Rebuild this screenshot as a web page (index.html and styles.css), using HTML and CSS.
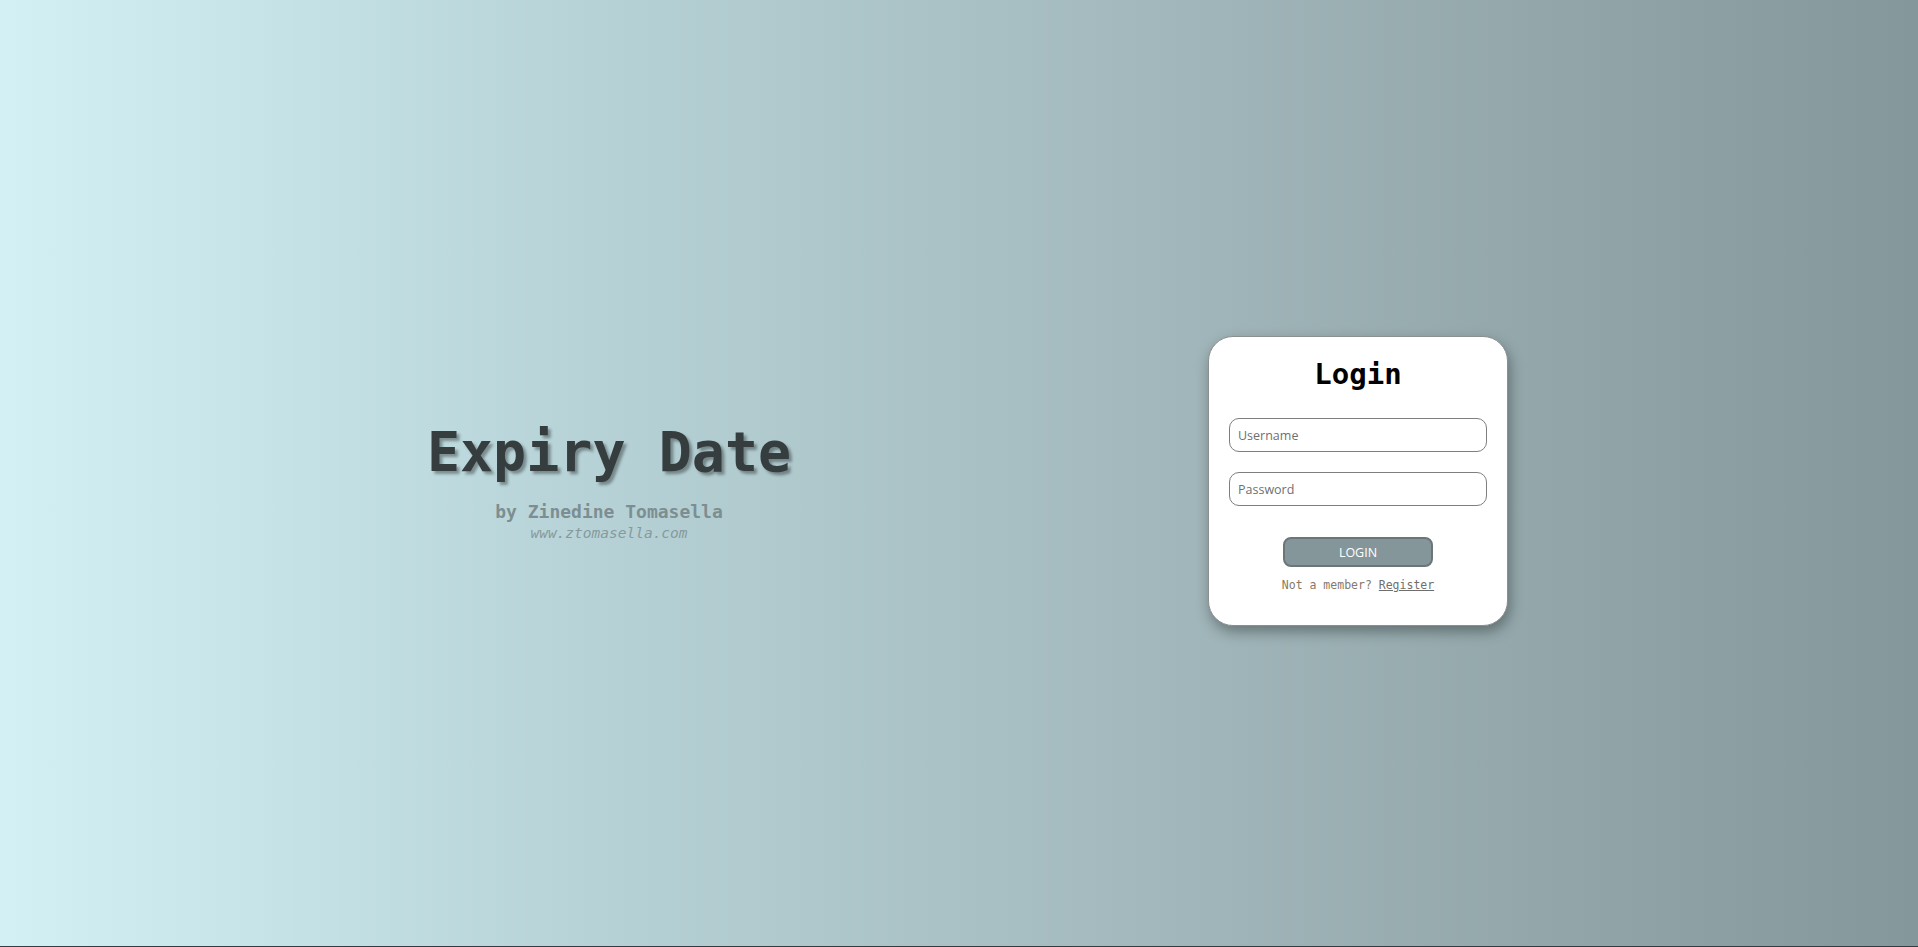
FILE: index.html
```html
<!DOCTYPE html>
<html lang="en">
<head>
<meta charset="utf-8">
<title>Expiry Date - Login</title>
<link rel="stylesheet" href="styles.css">
</head>
<body>
<main class="page">
  <section class="brand">
    <h1 class="brand-title">Expiry Date</h1>
    <p class="brand-author">by Zinedine Tomasella</p>
    <p class="brand-site">www.ztomasella.com</p>
  </section>
  <section class="card">
    <h2 class="card-title">Login</h2>
    <form class="login-form">
      <input class="field" type="text" placeholder="Username">
      <input class="field" type="password" placeholder="Password">
      <button class="login-btn" type="button">LOGIN</button>
      <p class="register">Not a member? <a href="#" class="register-link">Register</a></p>
    </form>
  </section>
</main>
</body>
</html>
```

FILE: styles.css
```css
html, body {
  margin: 0;
  padding: 0;
}
body {
  background: #333b43;
  height: 947px;
  overflow: hidden;
}
.page {
  height: 930px;
  padding-top: 16px;
  display: flex;
  align-items: center;
  background: linear-gradient(to right, #d3f1f5 0%, #b7d3d7 30%, #a1b6ba 62%, #84979a 100%);
}
.brand {
  width: 1198px;
  padding-left: 10px;
  text-align: center;
  font-family: "DejaVu Sans Mono", monospace;
}
.brand-title {
  margin: 0;
  font-size: 55px;
  font-weight: bold;
  line-height: 66px;
  color: #353d3f;
  text-shadow: 3px 3px 3px rgba(0, 0, 0, 0.35);
}
.brand-author {
  margin: 16px 0 0;
  font-size: 18px;
  font-weight: bold;
  line-height: 22px;
  color: #7d8e92;
}
.brand-site {
  margin: 0;
  font-size: 14.5px;
  font-style: italic;
  line-height: 20px;
  color: #869a9e;
}
.card {
  width: 300px;
  height: 290px;
  box-sizing: border-box;
  background: #ffffff;
  border: 1px solid #8a8f90;
  border-radius: 25px;
  box-shadow: 2px 6px 14px rgba(0, 0, 0, 0.35);
  display: flex;
  flex-direction: column;
  align-items: center;
}
.card-title {
  margin: 17px 0 0;
  font-family: "DejaVu Sans Mono", monospace;
  font-size: 29px;
  font-weight: bold;
  line-height: 40px;
  color: #000;
}
.login-form {
  display: flex;
  flex-direction: column;
  align-items: center;
  margin-top: 24px;
}
.field {
  width: 258px;
  height: 34px;
  box-sizing: border-box;
  border: 1px solid #7e7e7e;
  border-radius: 10px;
  padding: 0 8px;
  font-family: "Open Sans", "Noto Sans", sans-serif;
  font-size: 12.5px;
  color: #333;
  background: #fff;
  margin-bottom: 20px;
}
.field::placeholder {
  color: #6f6f6f;
}
.login-btn {
  margin-top: 11px;
  width: 150px;
  height: 30px;
  box-sizing: border-box;
  background: #85969a;
  border: 2px solid #6c7679;
  border-radius: 8px;
  color: #ffffff;
  font-family: "Open Sans", "Noto Sans", sans-serif;
  font-size: 12.5px;
  padding: 0;
}
.register {
  margin: 10px 0 0;
  font-family: "DejaVu Sans Mono", monospace;
  font-size: 11.5px;
  line-height: 16px;
  color: #85796b;
}
.register-link {
  color: #6e6e6e;
  text-decoration: underline;
}
```
